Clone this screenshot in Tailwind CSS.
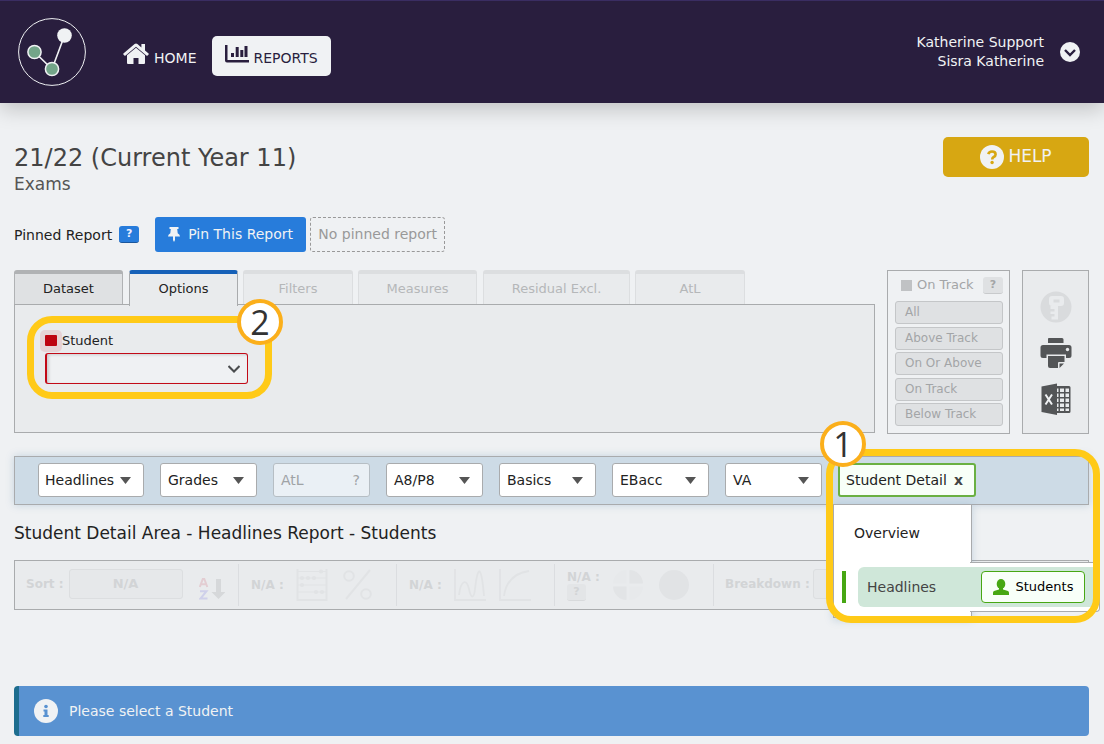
<!DOCTYPE html>
<html lang="en">
<head>
<meta charset="utf-8">
<meta name="viewport" content="width=device-width, initial-scale=1">
<title>Reports</title>
<script src="https://cdn.jsdelivr.net/npm/@tailwindcss/browser@4"></script>
</head>
<body class="min-h-screen overflow-x-hidden bg-[#eff1f3] font-['DejaVu_Sans',sans-serif] text-[13px] text-[#222]">

<header class="flex h-[103px] items-center border-t border-[#3a2d62] bg-[#291e3e] pr-6 pb-px pl-[18px] text-[#f0f2f4] shadow-[0_6px_20px_rgba(0,0,0,0.2)]">
  <a href="#" aria-label="Home page" class="block">
    <svg class="size-[68px]" viewBox="0 0 68 68" fill="none">
      <circle cx="34" cy="34" r="33.4" stroke="#f0f2f4"/>
      <path d="M16.500 34 34 51 46.500 17.500" stroke="#f0f2f4" stroke-width="1.600"/>
      <circle cx="46.500" cy="17.500" r="7.300" fill="#f0f2f4"/>
      <circle cx="16.500" cy="34" r="6.600" fill="#73a589" stroke="#f0f2f4" stroke-width="1.500"/>
      <circle cx="34" cy="51" r="6.600" fill="#73a589" stroke="#f0f2f4" stroke-width="1.500"/>
    </svg>
  </a>
  <nav class="mt-2 ml-[37px] flex items-center gap-4 text-sm">
    <a href="#" class="flex h-10 items-center gap-[5px]">
      <svg class="-mt-1 h-[22px] w-[26px]" viewBox="0 0 26 22" fill="currentColor"><path d="M13 4.800 4 12.300V20q0 1 1 1h5.500v-6h5v6H21q1 0 1-1v-7.700zM25.600 10.600 22 7.600V1h-3.600v3.500L14.400 1.100q-1.400-1-2.800 0L.4 10.600q-.4.400 0 .8l1 1.200q.4.400.9.100L13 3.800l10.700 8.900q.5.300.9-.1l1-1.200q.4-.4 0-.8z"/></svg>
      <span class="mt-1">HOME</span>
    </a>
    <a href="#" class="flex h-10 items-center gap-1 rounded-[5px] bg-[#f0f2f4] px-[13px] text-[#291e3e]">
      <svg class="-mt-1 h-[18px] w-6" viewBox="0 0 24 18" fill="currentColor"><path d="M0 0h2.500v15H24v2.500H2q-2 0-2-2zM6 8h3v4H6zM10.700 2h3v10h-3zM15.300 5h3v7h-3zM19.500 1h3v11h-3z"/></svg>
      <span class="mt-1">REPORTS</span>
    </a>
  </nav>
  <div class="ml-auto pt-px text-right text-sm leading-[19px]">
    <p>Katherine Support</p>
    <p>Sisra Katherine</p>
  </div>
  <button type="button" aria-label="Account menu" class="mt-px ml-4">
    <svg class="size-5" viewBox="0 0 20 20"><circle cx="10" cy="10" r="10" fill="#f0f2f4"/><path d="m5 8 5 5 5-5" fill="none" stroke="#291e3e" stroke-width="2.400"/></svg>
  </button>
</header>

<main class="pt-[34px] pr-[15px] pb-2 pl-[14px]">
  <div class="flex items-start">
    <div class="pt-[6px]">
      <h1 class="text-2xl leading-[30px] text-[#444]">21/22 (Current Year 11)</h1>
      <p class="text-[17px] leading-[22px] text-[#555]">Exams</p>
    </div>
    <button type="button" class="ml-auto flex h-10 w-[146px] items-center justify-center gap-1 rounded-[5px] bg-[#d7a712] text-[17px] text-[#f0f2f4]">
      <svg class="size-6" viewBox="0 0 24 24"><circle cx="12" cy="12" r="12" fill="#f0f2f4"/><path d="M8.300 9.200Q9 6.500 12 6.500q3.600 0 3.600 2.900 0 1.600-2 2.600-1.400.7-1.400 2.400" fill="none" stroke="#d7a712" stroke-width="2.600"/><circle cx="12.100" cy="17.500" r="1.700" fill="#d7a712"/></svg>
      HELP
    </button>
  </div>

  <div class="mt-[22px] flex h-[35px] items-center">
    <span class="text-sm">Pinned Report</span>
    <button type="button" class="ml-[7px] h-[17px] w-5 rounded-[3px] border-b border-[#1a569c] bg-[#277cdb] text-[11px] leading-4 font-bold text-[#eef]">?</button>
    <button type="button" class="ml-4 flex h-full w-[151px] items-center justify-center gap-2 rounded-[3px] bg-[#277cdb] pb-px text-sm text-[#f0f2f4]">
      <svg class="h-[15px] w-3" viewBox="0 0 12 15" fill="currentColor"><path d="M1.500 0h9v2H9.200l.5 4.300Q12 7.500 12 9.500H7V13l-1 2-1-2V9.500H0q0-2 2.300-3.200L2.800 2H1.500z"/></svg>
      Pin This Report
    </button>
    <span class="ml-1 flex h-full w-[135px] items-center justify-center rounded-[3px] border border-dashed border-[#999] pb-px text-sm whitespace-nowrap text-[#999]">No pinned report</span>
  </div>

  <div class="mt-[18px] flex gap-3">
    <section class="min-w-0 flex-1 pb-px">
      <div class="flex h-[35px] gap-[5px]" role="tablist">
        <button type="button" role="tab" class="mr-px h-[35px] w-[109px] rounded-t-[3px] border border-t-4 border-[#b0b2b4] bg-[#dfe1e3]">Dataset</button>
        <button type="button" role="tab" aria-selected="true" class="relative z-10 h-[36px] w-[109px] rounded-t-[3px] border border-t-4 border-b-0 border-[#a9abad] border-t-[#1661b8] bg-[#e9ebed] pb-[2px]">Options</button>
        <button type="button" role="tab" disabled class="w-[110px] rounded-t-[3px] border border-t-4 border-b-0 border-[#dcdee0] bg-[#e9ebed] pb-[2px] text-[#b5b7b9]">Filters</button>
        <button type="button" role="tab" disabled class="mr-px w-[119px] rounded-t-[3px] border border-t-4 border-b-0 border-[#dcdee0] bg-[#e9ebed] pb-[2px] text-[#b5b7b9]">Measures</button>
        <button type="button" role="tab" disabled class="w-[147px] rounded-t-[3px] border border-t-4 border-b-0 border-[#dcdee0] bg-[#e9ebed] pb-[2px] text-[#b5b7b9]">Residual Excl.</button>
        <button type="button" role="tab" disabled class="w-[110px] rounded-t-[3px] border border-t-4 border-b-0 border-[#dcdee0] bg-[#e9ebed] pb-[2px] text-[#b5b7b9]">AtL</button>
      </div>
      <div role="tabpanel" class="relative -mt-px h-[129px] border border-[#a9abad] bg-[#e9ebed] pt-6 pl-[25px]">
        <div class="flex h-[23px] items-center">
          <span class="flex size-[22px] items-center justify-center rounded-[5px] bg-[#e6d2d5]"><span class="h-[11px] w-3 rounded-[1px] bg-[#bd0310]"></span></span>
          <label for="student">Student</label>
        </div>
        <div class="relative mt-px ml-[5px] w-[203px]">
          <select id="student" class="block h-[31px] w-full appearance-none rounded-[3px] border border-l-2 border-[#c20a17] bg-[#eff1f3] px-2 shadow-[inset_2px_1px_3px_rgba(0,0,0,0.15)]"><option></option></select>
          <svg class="pointer-events-none absolute top-3 right-2 h-2 w-3" viewBox="0 0 12 8" fill="none" stroke="#4a4c4e" stroke-width="2"><path d="m.5 1 5.500 5.500L11.500 1"/></svg>
        </div>
        <div class="pointer-events-none absolute top-[11px] left-3 h-[83px] w-[245px] rounded-[25px] border-[7px] border-[#ffca18]"></div>
        <div class="absolute -top-[6px] left-[222px] z-20 flex size-[46px] items-center justify-center rounded-full border-4 border-[#fbaf1b] bg-white font-['Open_Sans',sans-serif] text-[34px] leading-none text-[#333]">2</div>
      </div>
    </section>

    <section class="flex w-[123px] flex-col border border-[#a9abad] pt-[5px] pr-[6px] pb-[7px] pl-[7px] text-[#a3a5a7]">
      <div class="flex h-[18px] items-center pl-[6px]">
        <span class="size-[11px] bg-[#c0c2c4]"></span>
        <span class="ml-[5px]">On Track</span>
        <button type="button" disabled class="ml-auto h-[17px] w-5 rounded-[3px] border-b border-[#c8cacc] bg-[#dfe1e3] text-[11px] leading-4 font-bold">?</button>
      </div>
      <div class="mt-[7px] flex flex-1 flex-col justify-between text-xs leading-[21px] [text-shadow:0_0_1px_#a3a5a7]">
        <button type="button" disabled class="rounded-[3px] border border-[#c4c6c8] bg-[#dfe1e3] px-[9px] text-left">All</button>
        <button type="button" disabled class="rounded-[3px] border border-[#c4c6c8] bg-[#dfe1e3] px-[9px] text-left">Above Track</button>
        <button type="button" disabled class="rounded-[3px] border border-[#c4c6c8] bg-[#dfe1e3] px-[9px] text-left">On Or Above</button>
        <button type="button" disabled class="rounded-[3px] border border-[#c4c6c8] bg-[#dfe1e3] px-[9px] text-left">On Track</button>
        <button type="button" disabled class="rounded-[3px] border border-[#c4c6c8] bg-[#dfe1e3] px-[9px] text-left">Below Track</button>
      </div>
    </section>

    <section class="flex w-[67px] flex-col items-center gap-[14px] border border-[#a9abad] bg-[#e9ebed] pt-5 pl-px">
      <button type="button" disabled aria-label="Key">
        <svg class="size-8" viewBox="0 0 32 32"><circle cx="16" cy="16" r="15.500" fill="#d9dbdd"/><path fill="#e9ebed" fill-rule="evenodd" d="M12 5h9q3 0 3 3v4q0 3-3 3h-3v13.500h-6.500v-3h3V23h-4v-2.500h4V18h-4v-3H12q-3 0-3-3V8q0-3 3-3zm1.500 3.500v3h6v-3z"/></svg>
      </button>
      <button type="button" aria-label="Print">
        <svg class="h-8 w-8" viewBox="0 0 32 32" fill="#535557"><path d="M8.500 1H22q1.500 0 1.500 1.500V6H8V2.500Q8 1 8.500 1zM3 8h26q2.500 0 2.500 2.500v8q0 2.500-2.500 2.500h-3v-3.500H6.500V21H3Q.5 21 .5 18.500v-8Q.5 8 3 8zM8 19h16.500v6H19q-1 0-1 1v5h-8q-2 0-2-2zM19.500 26.500h4.500L19.500 31z"/><circle cx="27.500" cy="12.500" r="1.700" fill="#e9ebed"/></svg>
      </button>
      <button type="button" aria-label="Export to Excel">
        <svg class="size-8" viewBox="0 0 32 32"><path fill="#535557" d="M1.500 3.500 17 .5v31.500L1.500 29z"/><path fill="#535557" fill-rule="evenodd" d="M17 3h12q1.500 0 1.500 1.500v24Q30.500 30 29 30H17zM17 5.500V9h1.500V5.500zm3 0V9h4V5.500zm5.500 0V9H29V5.500zM17 10.500V14h1.500v-3.500zm3 0V14h4v-3.500zm5.500 0V14H29v-3.500zM17 15.500V19h1.500v-3.500zm3 0V19h4v-3.500zm5.500 0V19H29v-3.500zM17 20.500V24h1.500v-3.500zm3 0V24h4v-3.500zm5.500 0V24H29v-3.500zM17 25.500v2.500h1.500v-2.500zm3 0v2.500h4v-2.500zm5.500 0v2.500H29v-2.500z"/><path d="m5.500 11.500 6.500 10M12 11.500l-6.500 10" stroke="#f0f2f4" stroke-width="2"/></svg>
      </button>
    </section>
  </div>

  <nav class="relative z-10 mt-[22px] flex h-[49px] items-start gap-4 border border-[#a9abad] bg-[#cddbe6] pt-[6px] pl-[23px] text-sm shadow-[0_0_8px_rgba(80,130,170,0.28)]">
    <button type="button" class="flex h-[34px] w-[106px] items-center justify-between rounded-[3px] border border-[#a9abad] bg-white pr-3 pl-[6px]">Headlines <svg class="h-[7px] w-[11px]" viewBox="0 0 11 7" fill="#555"><path d="M0 0h11L5.500 7z"/></svg></button>
    <button type="button" class="flex h-[34px] w-[97px] items-center justify-between rounded-[3px] border border-[#a9abad] bg-white pr-3 pl-[7px]">Grades <svg class="h-[7px] w-[11px]" viewBox="0 0 11 7" fill="#555"><path d="M0 0h11L5.500 7z"/></svg></button>
    <button type="button" disabled class="flex h-[34px] w-[97px] items-center justify-between rounded-[3px] border border-[#b6bec4] bg-[#eaf0f5] pr-[9px] pl-[7px] text-[#9fa3a6]">AtL <span>?</span></button>
    <button type="button" class="flex h-[34px] w-[97px] items-center justify-between rounded-[3px] border border-[#a9abad] bg-white pr-3 pl-[7px]">A8/P8 <svg class="h-[7px] w-[11px]" viewBox="0 0 11 7" fill="#555"><path d="M0 0h11L5.500 7z"/></svg></button>
    <button type="button" class="flex h-[34px] w-[97px] items-center justify-between rounded-[3px] border border-[#a9abad] bg-white pr-3 pl-[7px]">Basics <svg class="h-[7px] w-[11px]" viewBox="0 0 11 7" fill="#555"><path d="M0 0h11L5.500 7z"/></svg></button>
    <button type="button" class="flex h-[34px] w-[97px] items-center justify-between rounded-[3px] border border-[#a9abad] bg-white pr-3 pl-[7px]">EBacc <svg class="h-[7px] w-[11px]" viewBox="0 0 11 7" fill="#555"><path d="M0 0h11L5.500 7z"/></svg></button>
    <button type="button" class="flex h-[34px] w-[97px] items-center justify-between rounded-[3px] border border-[#a9abad] bg-white pr-3 pl-[7px]">VA <svg class="h-[7px] w-[11px]" viewBox="0 0 11 7" fill="#555"><path d="M0 0h11L5.500 7z"/></svg></button>
    <div class="relative">
      <button type="button" aria-expanded="true" class="flex h-[34px] w-[138px] items-center justify-between rounded-[3px] border-2 border-[#6ab042] bg-[#f8fff8] pr-[11px] pl-[6px]">Student Detail <span class="font-bold text-[#444]">x</span></button>
      <div class="absolute top-[41px] -left-[5px] h-[114px] w-[139px] border border-[#a9abad] bg-white pt-[14px] shadow-[0_2px_8px_rgba(80,130,170,0.28)]">
        <a href="#" class="block h-12 pl-5 leading-7">Overview</a>
      </div>
      <div class="absolute top-[99px] left-[132px] h-[50px] w-[130px] rounded-r-[4px] border border-l-0 border-[#a9abad] bg-white"></div>
      <div class="absolute top-[104px] left-1 flex h-10 w-[254px] items-center">
        <span class="h-8 w-1 bg-[#47a713]"></span>
        <div class="ml-3 flex h-full flex-1 items-center rounded-l-[6px] bg-[#cfe7d9] pr-[11px] pl-[9px]">
          <a href="#" class="text-[#444]">Headlines</a>
          <button type="button" class="ml-auto flex h-8 w-[104px] items-center justify-center gap-[7px] rounded-[4px] border border-[#47a713] bg-[#f8fff8] text-[13px] text-black">
            <svg class="size-4" viewBox="0 0 16 16" fill="#47a713"><ellipse cx="8" cy="5" rx="4.300" ry="5"/><path d="M6 8h4v2.500l5 1.500q1 .5 1 1.700V16H0v-2.300Q0 12.500 1 12l5-1.500z"/></svg>
            Students
          </button>
        </div>
      </div>
      <div class="pointer-events-none absolute -top-[14px] -left-3 h-[174px] w-[274px] rounded-[25px] border-[7px] border-[#ffca18]"></div>
      <div class="absolute -top-[42px] -left-[18px] flex size-[46px] items-center justify-center rounded-full border-4 border-[#fbaf1b] bg-white font-['Open_Sans',sans-serif] text-[34px] leading-none text-[#333]">1</div>
    </div>
  </nav>

  <h2 class="mt-4 text-[17px] leading-6">Student Detail Area - Headlines Report - Students</h2>

  <div class="mt-[15px] flex h-[50px] overflow-hidden border border-[#a9abad] bg-[#e9ebed] py-[3px] font-bold text-[#d2d4d6]">
    <div class="flex w-[224px] items-center border-r border-[#dbdde0] pl-[11px]">
      <span class="pb-[2px] text-xs">Sort :</span>
      <button type="button" disabled class="mb-[2px] ml-[5px] h-[30px] w-[114px] rounded-[3px] border border-[#dcdee0] bg-[#e6e8ea]">N/A</button>
      <svg class="mt-2 ml-4 h-[22px] w-[26px]" viewBox="0 0 26 22" fill="none"><path d="m.8 9 3-8h1.500l3 8M2.300 6.300h4.500" stroke="#e3cdd2" stroke-width="2"/><path d="M1 13.200h6.500L1.500 20.500H8.500" stroke="#cfd0ea" stroke-width="2"/><path d="M17 1h5v13h4.500l-7 7-7-7H17z" fill="#d6d8da"/></svg>
    </div>
    <div class="flex w-[158px] items-center border-r border-[#dbdde0] pl-3">
      <span class="text-xs">N/A :</span>
      <svg class="ml-3 h-8 w-[32px]" viewBox="0 0 32 32" fill="none" stroke="#e1e3e5" stroke-width="1.200"><path d="M1.500 0v31h29V0" stroke-width="2"/><path d="M1 2.500h30M1 9h30M1 16h30M1 23h30"/><g fill="#e1e3e5"><circle cx="25" cy="2.500" r="1.500"/><circle cx="6" cy="9" r="1.500"/><circle cx="12" cy="9" r="1.500"/><circle cx="18" cy="9" r="1.500"/><circle cx="6" cy="16" r="1.500"/><circle cx="20" cy="23" r="1.500"/><circle cx="26" cy="23" r="1.500"/></g></svg>
      <svg class="ml-[15px] h-8 w-[30px]" viewBox="0 0 30 32" fill="none" stroke="#e1e3e5" stroke-width="2"><path d="M27 1 3 30"/><circle cx="6" cy="7" r="4.800"/><circle cx="23" cy="25" r="4.800"/></svg>
    </div>
    <div class="flex w-[158px] items-center border-r border-[#dbdde0] pl-3">
      <span class="text-xs">N/A :</span>
      <svg class="ml-3 h-8 w-8" viewBox="0 0 32 32" fill="none" stroke="#e1e3e5" stroke-width="1.800"><path d="M1 0v31h31M5 26C7 10 13 10 15 20s5 10 6 0 3-20 5-17 3 12 4 24"/></svg>
      <svg class="ml-[13px] h-8 w-8" viewBox="0 0 32 32" fill="none" stroke="#e1e3e5" stroke-width="1.800"><path d="M1 0v31h31M5 27Q8 5 30 2"/></svg>
    </div>
    <div class="flex w-[159px] items-center border-r border-[#dbdde0] pl-3">
      <div class="w-[42px]">
        <p class="text-xs leading-[14px]">N/A :</p>
        <button type="button" disabled class="block h-[17px] w-[19px] rounded-[3px] border-b border-[#d8dadc] bg-[#e3e5e7] text-[11px] leading-4">?</button>
      </div>
      <svg class="ml-1 size-[30px]" viewBox="0 0 30 30"><path fill="#e2e4e6" d="M16.500 0A14 14 0 0 1 30 13.500H16.500zM13.500 30A14 14 0 0 1 0 16.500h13.500z"/><path fill="#e7e9eb" d="M0 13.500A14 14 0 0 1 13.500 0v13.500zM30 16.500A14 14 0 0 1 16.500 30V16.500z"/></svg>
      <svg class="ml-4 size-[30px]" viewBox="0 0 30 30"><circle cx="15" cy="15" r="15" fill="#e1e3e5"/></svg>
    </div>
    <div class="flex items-center pl-[11px]">
      <span class="pb-[2px] text-xs whitespace-nowrap">Breakdown :</span>
      <button type="button" disabled aria-label="Breakdown" class="mb-[2px] ml-[3px] h-[30px] w-[114px] rounded-[3px] border border-[#dcdee0] bg-[#e6e8ea]"></button>
    </div>
  </div>

  <div role="status" class="mt-[76px] flex h-[50px] items-center rounded-[4px] border-l-[5px] border-[#1d6d8e] bg-[#5992d1] pb-px pl-[15px] text-sm text-[#f0f2f4]">
    <svg class="mr-[11px] size-6" viewBox="0 0 24 24"><circle cx="12" cy="12" r="12" fill="#f0f2f4"/><circle cx="12" cy="7.500" r="1.800" fill="#5992d1"/><path fill="#5992d1" d="M9.500 10.500h4v5.500h1.200v2H9.300v-2h1.200v-3.500h-1z"/></svg>
    Please select a Student
  </div>
</main>
</body>
</html>
